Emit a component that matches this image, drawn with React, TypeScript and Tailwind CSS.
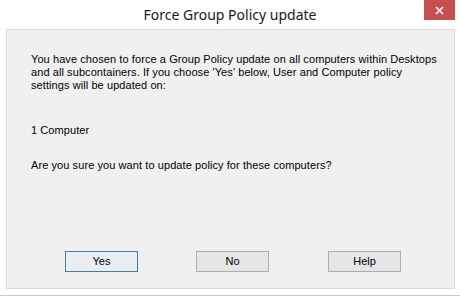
export default function App() {
  const body = { fontFamily: '"Liberation Sans", Arial, sans-serif' };

  return (
    <div className="w-[460px] h-[298px] bg-white relative overflow-hidden">
      {/* Title bar */}
      <div className="h-[29px] flex items-start justify-center relative">
        <span
          className="mt-[5px] text-[14px] leading-[20px] text-[#1a1a1a]"
          style={{ fontFamily: '"Noto Sans", "Open Sans", sans-serif' }}
        >
          Force Group Policy update
        </span>
        <div className="absolute right-[5px] top-0 w-[31px] h-[20px] bg-[#c7504f] flex items-center justify-center">
          <svg width="9" height="9" viewBox="0 0 9 9">
            <path d="M1 1 L8 8 M8 1 L1 8" stroke="white" strokeWidth="1.6" />
          </svg>
        </div>
      </div>

      {/* Content panel */}
      <div className="mx-[6px] w-[449px] h-[260px] bg-[#f0f0f0] border border-[#d9d9d9] flex flex-col" style={body}>
        <div className="pl-[24px] pt-[23px] text-[11px] leading-[13px] tracking-[0.08px] text-black">
          <p>You have chosen to force a Group Policy update on all computers within Desktops</p>
          <p>and all subcontainers. If you choose 'Yes' below, User and Computer policy</p>
          <p>settings will be updated on:</p>
          <p className="mt-[32px]">1 Computer</p>
          <p className="mt-[22px]">Are you sure you want to update policy for these computers?</p>
        </div>
        <div className="mt-auto mb-[16px] flex text-[11px] text-black">
          <button className="ml-[58px] w-[73px] h-[21px] border border-[#3c7fb1] bg-[#e9eef2] flex items-center justify-center">
            Yes
          </button>
          <button className="ml-[58px] w-[73px] h-[21px] border border-[#adadad] bg-[#e6e6e6] flex items-center justify-center">
            No
          </button>
          <button className="ml-[59px] w-[73px] h-[21px] border border-[#adadad] bg-[#e6e6e6] flex items-center justify-center">
            Help
          </button>
        </div>
      </div>

      <div className="mt-[6px] h-px w-full bg-[#c8c8c8]" />
    </div>
  );
}
